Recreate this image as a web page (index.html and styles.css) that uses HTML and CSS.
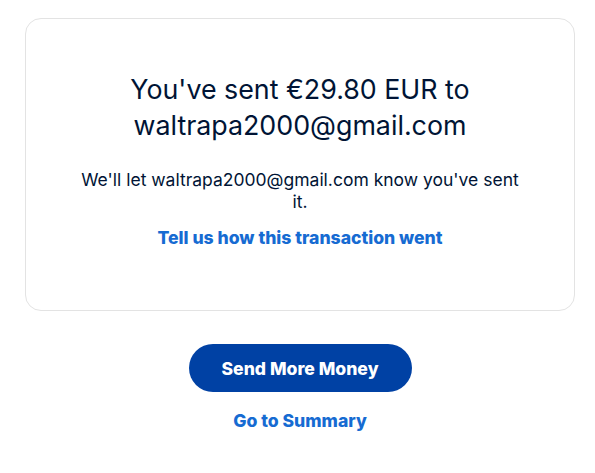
FILE: index.html
```html
<!DOCTYPE html>
<html>
<head>
<meta charset="utf-8">
<link rel="stylesheet" href="styles.css">
</head>
<body>
<main class="page">
  <section class="card">
    <h1 class="title">You've sent €29.80 EUR to waltrapa2000@gmail.com</h1>
    <p class="note">We'll let waltrapa2000@gmail.com know you've sent it.</p>
    <a class="link" href="#">Tell us how this transaction went</a>
  </section>
  <div class="actions">
    <button class="primary">Send More Money</button>
    <a class="link summary" href="#">Go to Summary</a>
  </div>
</main>
</body>
</html>
```
FILE: styles.css
```css
html, body {
  margin: 0;
  padding: 0;
  background: #ffffff;
}
body {
  font-family: Inter, "Liberation Sans", sans-serif;
  color: #001435;
}
.page {
  padding: 18px 20px 0 25px;
  display: flex;
  flex-direction: column;
}
.card {
  width: 550px;
  height: 293px;
  box-sizing: border-box;
  border: 1px solid #e3e3e3;
  border-radius: 16px;
  display: flex;
  flex-direction: column;
  align-items: center;
  padding: 52px 40px 0;
}
.title {
  margin: 0;
  font-size: 26.8px;
  font-weight: 400;
  line-height: 36px;
  text-align: center;
  width: 380px;
}
.note {
  margin: 26px 0 0;
  font-size: 17.5px;
  line-height: 22px;
  text-align: center;
  width: 450px;
}
.link {
  color: #166bd2;
  font-weight: 800;
  font-size: 17.6px;
  text-decoration: none;
  line-height: 22px;
}
.card .link {
  margin-top: 14px;
}
.actions {
  width: 550px;
  display: flex;
  flex-direction: column;
  align-items: center;
  padding-top: 33px;
}
.primary {
  width: 223px;
  height: 48px;
  border: none;
  border-radius: 24px;
  background: #0041a4;
  color: #ffffff;
  font-family: Inter, "Liberation Sans", sans-serif;
  font-weight: 800;
  font-size: 17.6px;
}
.summary {
  margin-top: 18px;
}
```
